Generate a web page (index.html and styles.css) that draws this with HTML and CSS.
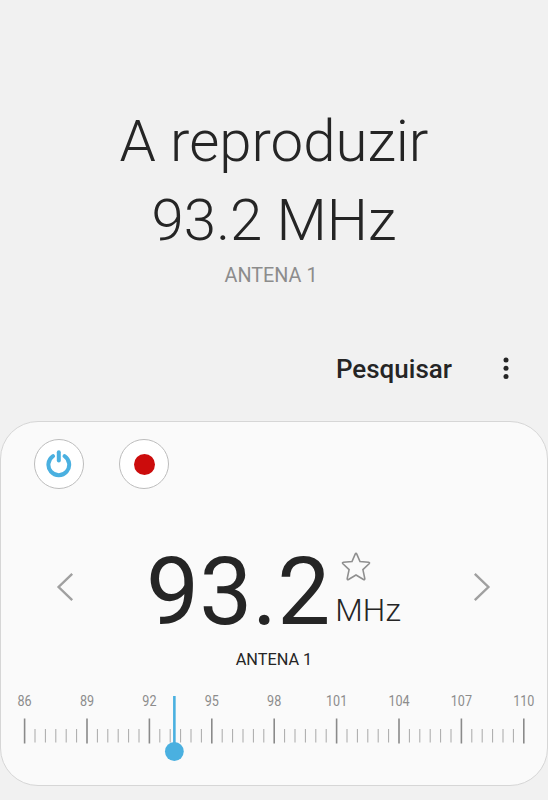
FILE: index.html
```html
<!DOCTYPE html>
<html lang="pt">
<head>
<meta charset="UTF-8">
<meta name="viewport" content="width=device-width, initial-scale=1.0">
<title>Rádio</title>
<link rel="stylesheet" href="styles.css">
</head>
<body>
<header class="header">
    <h1>A reproduzir<br>93.2 MHz</h1>
    <p class="header-station">ANTENA 1</p>
</header>

<div class="toolbar">
    <button class="search-btn">Pesquisar</button>
    <button class="more-btn" aria-label="Mais opções">
        <svg width="8" height="24" viewBox="0 0 8 24">
            <circle cx="4" cy="3" r="2.5"/>
            <circle cx="4" cy="11.2" r="2.5"/>
            <circle cx="4" cy="19.4" r="2.5"/>
        </svg>
    </button>
</div>

<main class="card">
    <div class="controls">
        <button class="round-btn" aria-label="Ligar">
            <svg width="26" height="28" viewBox="0 0 26 28">
                <path d="M7 6.1A10.4 10.4 0 1 0 18.6 6.1" fill="none" stroke="#4ab0e0" stroke-width="4" stroke-linecap="round"/>
                <path d="M12.8 2.2V10.4" stroke="#4ab0e0" stroke-width="4" stroke-linecap="round"/>
            </svg>
        </button>
        <button class="round-btn" aria-label="Gravar">
            <span class="record-dot"></span>
        </button>
    </div>

    <div class="tuner">
        <button class="arrow" aria-label="Anterior">
            <svg width="18" height="30" viewBox="0 0 18 30"><path d="M16.2 1.8L2.6 15L16.2 28.2"/></svg>
        </button>
        <div class="frequency">
            <span class="frequency-value">93.2</span>
            <div class="frequency-side">
                <svg class="star" width="30" height="30" viewBox="0 0 30 30">
                    <path d="M14.2 2.1Q15 .6 15.8 2.1L19 9.5L27.6 10.3Q29.2 10.6 28.1 11.8L21.9 17.6L23.8 26.6Q23.9 28.2 22.5 27.5L15 23L7.5 27.5Q6.1 28.2 6.2 26.6L8.1 17.6L1.9 11.8Q.8 10.6 2.4 10.3L11 9.5Z"/>
                </svg>
                <span class="frequency-unit">MHz</span>
            </div>
        </div>
        <button class="arrow" aria-label="Seguinte">
            <svg width="18" height="30" viewBox="0 0 18 30"><path d="M1.8 1.8L15.4 15L1.8 28.2"/></svg>
        </button>
    </div>
    <p class="station">ANTENA 1</p>

    <svg class="dial" id="dial" width="546" height="80" viewBox="0 0 546 80"></svg>
</main>

<script>
const MIN = 86;
const MAX = 110;
const CURRENT = 93.2;
const START = 23.6;
const STEP = 20.8; // pixels per MHz

const dial = document.getElementById('dial');

function xFor(freq) {
    return START + (freq - MIN) * STEP;
}

let marks = '';
for (let f = MIN; f <= MAX; f += 0.5) {
    const x = xFor(f);
    if ((f - MIN) % 3 === 0) {
        marks += `<text class="dial-label" transform="translate(${x} 13.8) scale(0.84 1)">${f}</text>`;
        marks += `<line class="tick-major" x1="${x}" x2="${x}" y1="26.5" y2="51.5"/>`;
    } else {
        marks += `<line class="tick" x1="${x}" x2="${x}" y1="37" y2="50.5"/>`;
    }
}

// Needle for the current frequency
const pos = xFor(CURRENT);
marks += `<line class="needle" x1="${pos}" x2="${pos}" y1="4" y2="58"/>`;
marks += `<circle class="needle-knob" cx="${pos}" cy="59.5" r="9.4"/>`;
dial.innerHTML = marks;
</script>
</body>
</html>
```
FILE: styles.css
```css
body {
    margin: 0;
    height: 800px;
    overflow: hidden;
    background-color: #f1f1f1;
    color: #252525;
    font-family: Roboto, sans-serif;
}
h1 {
    margin: 0;
    font-size: 58.2px;
    font-weight: 300;
    line-height: 78.5px;
}
p {
    margin: 0;
}
button {
    padding: 0;
    border: none;
    background: none;
    color: inherit;
    font-family: inherit;
    cursor: pointer;
}
svg {
    display: block;
}
.header {
    padding-top: 102px;
    text-align: center;
}
.header-station {
    margin-top: 5px;
    margin-right: 6px;
    color: #8c8c8c;
    font-size: 19.8px;
    line-height: 24px;
}
.toolbar {
    display: flex;
    justify-content: flex-end;
    align-items: center;
    height: 32px;
    margin-top: 65px;
    padding-right: 38px;
}
.search-btn {
    font-size: 26px;
    font-weight: 500;
    line-height: 32px;
}
.more-btn {
    margin-left: 50px;
}
.more-btn circle {
    fill: #252525;
}
.card {
    box-sizing: border-box;
    height: 365px;
    margin-top: 36px;
    border: 1px solid #d6d6d6;
    border-radius: 38px;
    background-color: #fafafa;
}
.controls {
    display: flex;
    gap: 35px;
    padding: 17px 33px 0;
}
.round-btn {
    display: flex;
    align-items: center;
    justify-content: center;
    box-sizing: border-box;
    width: 50px;
    height: 50px;
    border: 1px solid #bdbdbd;
    border-radius: 50%;
    background-color: #fff;
}
.record-dot {
    width: 21px;
    height: 21px;
    border-radius: 50%;
    background-color: #cc0c0c;
}
.tuner {
    display: flex;
    justify-content: space-between;
    height: 80px;
    margin-top: 63px;
    padding: 0 56px 0 55px;
}
.arrow {
    align-self: flex-start;
    margin-top: 20px;
}
.arrow path {
    fill: none;
    stroke: #a0a0a0;
    stroke-width: 2.4;
}
.frequency {
    display: flex;
}
.frequency-value {
    font-size: 94.5px;
    line-height: 80px;
}
.frequency-side {
    margin-left: 5px;
}
.star {
    margin-left: 6px;
}
.star path {
    fill: none;
    stroke: #8f8f8f;
    stroke-width: 1.6;
}
.frequency-unit {
    display: block;
    font-size: 31.8px;
    font-weight: 300;
    line-height: 36px;
    margin-top: 10px;
}
.station {
    margin-top: 18px;
    font-size: 16.3px;
    line-height: 20px;
    text-align: center;
}
.dial {
    margin-top: 22px;
}
.dial-label {
    fill: #8c8c8c;
    font-size: 15px;
    text-anchor: middle;
}
.tick {
    stroke: #a8a8a8;
    stroke-width: 1;
}
.tick-major {
    stroke: #8a8a8a;
    stroke-width: 1.6;
}
.needle {
    stroke: #4ab0e0;
    stroke-width: 2.6;
}
.needle-knob {
    fill: #4ab0e0;
}
```
